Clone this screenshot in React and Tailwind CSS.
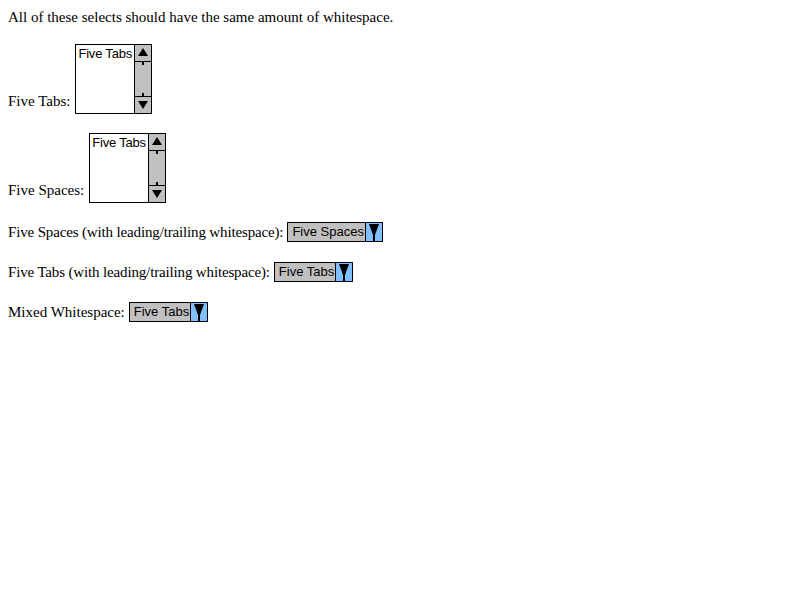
import React from 'react';

const serif = { fontFamily: '"Liberation Serif", "Times New Roman", serif' };
const sans = { fontFamily: '"Liberation Sans", Arial, sans-serif' };

function ScrollBar() {
  return (
    <svg width="16" height="68" viewBox="0 0 16 68" className="block">
      <rect x="0" y="0" width="16" height="68" fill="#c0c0c0" />
      {/* up button */}
      <polygon points="8,3 3,11 13,11" fill="#000" />
      <rect x="0" y="16" width="16" height="1" fill="#000" />
      <rect x="7" y="17" width="2" height="3" fill="#000" />
      {/* down button */}
      <rect x="7" y="48" width="2" height="3" fill="#000" />
      <rect x="0" y="51" width="16" height="1" fill="#000" />
      <polygon points="3,56 13,56 8,64" fill="#000" />
    </svg>
  );
}

function ListBox({ text }) {
  return (
    <div className="flex w-[77px] h-[70px] border border-black bg-white">
      <div className="flex-1 pl-[2px] pt-[1px] text-[13px] leading-[15px] tracking-[-0.2px] text-black whitespace-nowrap overflow-hidden" style={sans}>
        {text}
      </div>
      <div className="border-l border-black">
        <ScrollBar />
      </div>
    </div>
  );
}

function DropArrow() {
  return (
    <svg width="16" height="18" viewBox="0 0 16 18" className="block">
      <rect x="0" y="0" width="16" height="18" fill="#80bfff" />
      <polygon points="3,1 13,1 9,12 9,18 7,18 7,12" fill="#000" />
    </svg>
  );
}

function Dropdown({ text }) {
  return (
    <div className="flex items-stretch h-[20px] border border-black bg-[#c0c0c0]">
      <div className="pl-[4px] pr-[1px] text-[13px] leading-[18px] text-black whitespace-nowrap" style={sans}>
        {text}
      </div>
      <div className="border-l border-black">
        <DropArrow />
      </div>
    </div>
  );
}

export default function App() {
  return (
    <div className="min-h-[600px] bg-white p-2 text-black text-[15px]" style={serif}>
      <p className="leading-[18px] h-[18px]">All of these selects should have the same amount of whitespace.</p>

      <div className="mt-[18px] flex items-end gap-[5px]">
        <span className="leading-[18px] mb-[4px]">Five Tabs:</span>
        <ListBox text="Five Tabs" />
      </div>

      <div className="mt-[19px] flex items-end gap-[5px]">
        <span className="leading-[18px] mb-[4px]">Five Spaces:</span>
        <ListBox text="Five Tabs" />
      </div>

      <div className="mt-[19px] flex items-center gap-[4px]">
        <span className="leading-[18px] tracking-[-0.15px]">Five Spaces (with leading/trailing whitespace):</span>
        <Dropdown text="Five Spaces" />
      </div>

      <div className="mt-[20px] flex items-center gap-[4px]">
        <span className="leading-[18px] tracking-[-0.15px]">Five Tabs (with leading/trailing whitespace):</span>
        <Dropdown text="Five Tabs" />
      </div>

      <div className="mt-[20px] flex items-center gap-[4px]">
        <span className="leading-[18px]">Mixed Whitespace:</span>
        <Dropdown text="Five Tabs" />
      </div>
    </div>
  );
}
